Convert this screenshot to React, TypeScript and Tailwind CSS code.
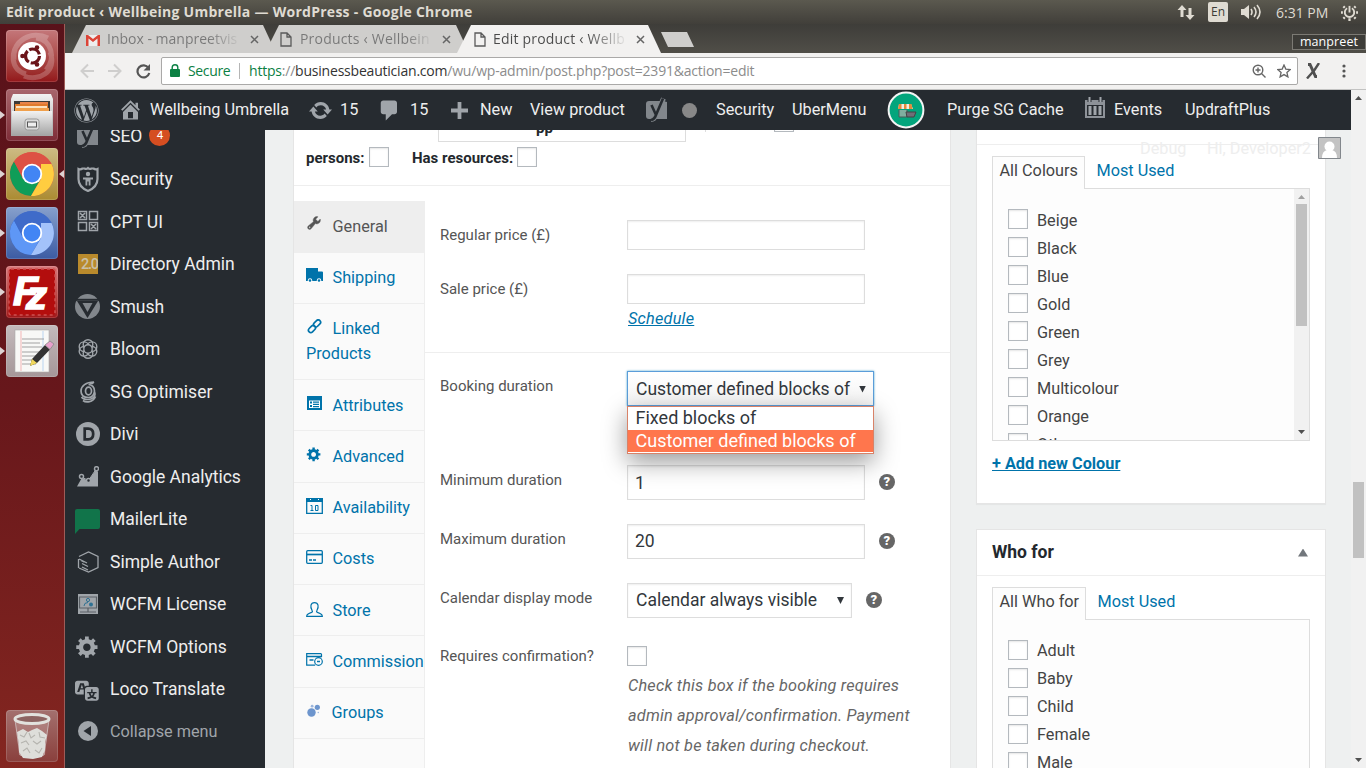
import React from "react";
import { FaWordpress } from "react-icons/fa";

const GEAR =
  "M18 12h-2.18c-.17.7-.44 1.35-.81 1.93l1.54 1.54-2.1 2.1-1.54-1.54c-.58.36-1.23.63-1.91.79V19H8v-2.18c-.68-.16-1.33-.43-1.91-.79l-1.54 1.54-2.12-2.12 1.54-1.54c-.36-.58-.63-1.23-.79-1.91H1V9.03h2.17c.16-.7.44-1.35.8-1.94L2.43 5.55l2.1-2.1 1.54 1.54c.58-.37 1.24-.64 1.93-.81V2h3v2.18c.68.16 1.33.43 1.91.79l1.54-1.54 2.12 2.12-1.54 1.54c.36.59.64 1.24.8 1.94H18V12zm-8.5 1.5c1.66 0 3-1.34 3-3s-1.34-3-3-3-3 1.34-3 3 1.34 3 3 3z";
const HOME =
  "M16 8.5l1.53 1.53-1.06 1.06L10 4.6l-6.47 6.49-1.06-1.06L10 2.5l4 4v-2h2v4zm-6-2.46l6 5.99V18H4v-5.97zM12 17v-5H8v5h4z";
const UPDATE =
  "M10.2 3.28c3.53 0 6.43 2.61 6.92 6h2.08l-3.5 4-3.5-4h2.32c-.45-1.97-2.21-3.45-4.32-3.45-1.45 0-2.73.71-3.54 1.78L4.95 5.66C6.23 4.2 8.11 3.28 10.2 3.28zm-.4 13.44c-3.52 0-6.43-2.61-6.92-6H.8l3.5-4c1.17 1.33 2.33 2.67 3.5 4H5.48c.45 1.97 2.21 3.45 4.32 3.45 1.45 0 2.73-.71 3.54-1.78l1.71 1.95c-1.28 1.46-3.15 2.38-5.25 2.38z";
const COMMENT =
  "M5 2h9c1.1 0 2 .9 2 2v7c0 1.1-.9 2-2 2h-2l-5 5v-5H5c-1.1 0-2-.9-2-2V4c0-1.1.9-2 2-2z";
const WRENCH =
  "M16.68 9.77c-1.34 1.34-3.3 1.67-4.95.99l-5.41 6.52c-.99.99-2.59.99-3.58 0s-.99-2.59 0-3.57l6.52-5.42c-.68-1.65-.35-3.61.99-4.95 1.28-1.28 3.12-1.62 4.72-1.06l-2.89 2.89 2.82 2.82 2.86-2.87c.53 1.58.18 3.39-1.08 4.65zM3.81 16.21c.4.39 1.04.39 1.43 0 .4-.4.4-1.04 0-1.43-.39-.4-1.03-.4-1.43 0-.39.39-.39 1.03 0 1.43z";
const TRANSLATE =
  "M11 7H9.49c-.63 0-1.25.3-1.59.7L7 5H4.13l-2.39 7h1.69l.74-2H7v4H2c-1.1 0-2-.9-2-2V5c0-1.1.9-2 2-2h7c1.1 0 2 .9 2 2v2zM6.51 9H4.49l1-2.93zM10 8h7c1.1 0 2 .9 2 2v7c0 1.1-.9 2-2 2h-7c-1.1 0-2-.9-2-2v-7c0-1.1.9-2 2-2zm7.25 5v-1.08h-3.17V9.75h-1.16v2.17H9.75V13h1.28c.11.85.56 1.85 1.28 2.62-.87.36-1.89.62-2.31.62-.01.02.22.97.2 1.46.84 0 2.21-.5 3.28-1.15 1.09.65 2.48 1.15 3.34 1.15-.02-.49.2-1.44.2-1.46-.43 0-1.49-.27-2.38-.63.7-.77 1.14-1.77 1.25-2.61h1.36zm-3.81 1.93c-.5-.46-.85-1.13-1.01-1.93h2.09c-.17.8-.51 1.47-1 1.93l-.04.03s-.03-.02-.04-.03z";

function Dash({ d, className = "size-[25px]" }: { d: string; className?: string }) {
  return (
    <svg viewBox="0 0 20 20" className={className} fill="currentColor" fillRule="evenodd">
      <path d={d} />
    </svg>
  );
}

function Yoast() {
  return (
    <svg viewBox="0 0 22 26" className="h-[26px] w-[22px]">
      <path d="M3 4h14l4 1v17H3a3 3 0 0 1-3-3V7a3 3 0 0 1 3-3z" fill="#82878c" />
      <path d="M5 8l5 10M17.5 1.5L10 18c-1 3-2.5 4.500-5 4.500" fill="none" stroke="#82878c" strokeWidth="5" />
      <path d="M5.500 8l4.500 10M17 1.500L10 18c-1 3-2.500 4.500-5 5" fill="none" stroke="#262b30" strokeWidth="2.600" />
    </svg>
  );
}

/* ---------- Desktop top panel ---------- */

function TopPanel() {
  return (
    <div className="flex h-6 shrink-0 items-center bg-linear-to-b from-[#5b594f] to-[#413f3a] pl-[6px] font-['Open_Sans','Noto_Sans',sans-serif] text-[#dfdbd2]">
      <div className="w-[1171px] whitespace-nowrap text-[14px] leading-6 font-bold tracking-[0.27px]">
        Edit product ‹ Wellbeing Umbrella — WordPress - Google Chrome
      </div>
      <svg viewBox="0 0 18 17" className="mr-[13px] h-[17px] w-[18px]" fill="#dfdbd2">
        <path d="M5 1l4.500 5H6.500v7h-3V6H.5zM13 16l-4.500-5h3V4h3v7h3z" />
      </svg>
      <div className="mr-[13px] flex h-5 w-5 items-center justify-center rounded-[2px] bg-[#dfdbd2] text-[12px] text-[#3c3b37]">
        En
      </div>
      <svg viewBox="0 0 21 18" className="mr-[14px] h-[18px] w-[21px]">
        <path d="M0 6h3l5-4v14l-5-4H0z" fill="#dfdbd2" />
        <path d="M10 6q2 3 0 6M13 4q4 5 0 10M16 2q6 7 0 14" fill="none" stroke="#dfdbd2" strokeWidth="1.600" />
      </svg>
      <div className="w-[65px] whitespace-nowrap text-[14px]">6:31 PM</div>
      <svg viewBox="0 0 18 18" className="size-[17px]" fill="none" stroke="#dfdbd2">
        <path d="M6.500 4.500a5 5 0 1 0 5 0" strokeWidth="2" />
        <path d="M9 2v7" strokeWidth="2" />
        <path d="M9 15v3M2 9H0M18 9h-2M4 4L2.500 2.500M14 4l1.500-1.500M4 14l-1.500 1.500M14 14l1.500 1.500" strokeWidth="2.400" />
      </svg>
    </div>
  );
}

/* ---------- Launcher ---------- */

function UbuntuIcon() {
  return (
    <svg viewBox="0 0 52 52" className="size-[52px]">
      <g fill="none" stroke="#fff" strokeOpacity=".22" strokeWidth="5">
        <path d="M8 30C6 10 26 0 42 8M20 44C4 40 4 20 14 12M44 22c8 20-12 30-26 24M30 8c16 2 20 20 10 32" />
      </g>
      <circle cx="26" cy="26" r="14" fill="#fff" />
      <circle cx="26.500" cy="26" r="7" fill="none" stroke="#6b1419" strokeWidth="3.200" strokeDasharray="12.700 2" />
      <circle cx="16.500" cy="26" r="2.300" fill="#6b1419" />
      <circle cx="31" cy="17.500" r="2.300" fill="#6b1419" />
      <circle cx="31" cy="34.500" r="2.300" fill="#6b1419" />
    </svg>
  );
}

function FilesIcon() {
  return (
    <svg viewBox="0 0 52 52" className="size-[52px]">
      <defs>
        <linearGradient id="cab" x1="0" y1="0" x2="0" y2="1">
          <stop offset="0" stopColor="#f2f2f2" />
          <stop offset="1" stopColor="#a5a5a5" />
        </linearGradient>
      </defs>
      <path d="M7 5h38l2 5v37H5V10z" fill="url(#cab)" />
      <path d="M8 12h36v12H8z" fill="#3c3a38" />
      <path d="M14 13h28v3H14z" fill="#e8844a" />
      <path d="M9 15h33v8H9z" fill="#e07a2c" />
      <path d="M10 17h31v2H10z" fill="#fbe3c2" />
      <path d="M9 19h34v5H9z" fill="#f0a04c" />
      <path d="M6 22h40v24H6z" fill="url(#cab)" />
      <rect x="19" y="30" width="14" height="11" rx="2.500" fill="#dcdcdc" stroke="#999" />
      <rect x="21.500" y="33" width="9" height="5" fill="#eee" stroke="#555" />
    </svg>
  );
}

function ChromeIcon({ blue = false }: { blue?: boolean }) {
  const a = blue ? "#3f6bc9" : "#dd5144";
  const b = blue ? "#5e97f6" : "#0f9d58";
  const c = blue ? "#a3c2fa" : "#ffcd40";
  return (
    <svg viewBox="0 0 52 52" className="size-[52px]">
      <circle cx="26" cy="26" r="22" fill={a} />
      <path d="M8 13.500A22 22 0 0 0 25 48l9.500-17L17 31z" fill={b} />
      <path d="M45.500 16A22 22 0 0 1 25 48l10-17V16z" fill={c} />
      <path d="M26 16h19.500A22 22 0 0 0 8 13.500l9 16z" fill={a} />
      <circle cx="26" cy="26" r="10.200" fill="#fff" />
      <circle cx="26" cy="26" r="8.400" fill="#4285f4" />
    </svg>
  );
}

function FilezillaIcon() {
  return (
    <svg viewBox="0 0 52 52" className="size-[52px]">
      <rect x="3" y="3" width="46" height="46" rx="2" fill="#b30d0d" stroke="#d05050" strokeWidth="1.500" strokeDasharray="3 3" />
      <g fill="#fff" stroke="#fff" strokeWidth="1.500" fontFamily="'Liberation Sans', sans-serif" fontWeight="700" fontStyle="italic">
        <text x="7" y="39" fontSize="40" textLength="25" lengthAdjust="spacingAndGlyphs">F</text>
        <text x="20" y="43" fontSize="39" textLength="21" lengthAdjust="spacingAndGlyphs">z</text>
      </g>
    </svg>
  );
}

function EditorIcon() {
  return (
    <svg viewBox="0 0 52 52" className="size-[52px]">
      <rect x="9" y="5" width="34" height="42" fill="#f8f8f6" stroke="#aaa" strokeWidth=".6" />
      <path d="M15 6v40" stroke="#f3b5b5" />
      <path d="M37 6v40" stroke="#b9d4f0" />
      <path d="M16 14h22M16 18h18M16 22h20M16 27h22M16 31h19M16 35h12M16 39h14" stroke="#999" strokeWidth=".9" />
      <path d="M24 41l2-7L39 20l5 4.500L31 38z" fill="#333" />
      <path d="M39 20l5-4 4 3-4 5.500z" fill="#e8a0cc" stroke="#888" strokeWidth=".8" />
      <path d="M24 41l2-7 5 4z" fill="#f2d95c" />
    </svg>
  );
}

function TrashIcon() {
  return (
    <svg viewBox="0 0 52 52" className="size-[52px]">
      <path d="M9 9l4 36q13 5 26 0l4-36z" fill="#fff" fillOpacity=".18" />
      <path d="M11 22l6-3 5 3 4-2 5-2 5 3 5 4-2 7 0 8-3 7-9 2-10-1-4-6 0-7z" fill="#dededa" />
      <path d="M14 25l4 2 3-5M23 23l2 5 4-3M33 22l1 5 5 1M15 33l5-2 3 4M27 31l4 3 4-3M17 41l4-3 3 5M29 40l4 3 3-5" fill="none" stroke="#b5b4af" strokeWidth="1.100" />
      <path d="M9 10l5 35q12 5 24 0l5-35" fill="none" stroke="#ddd" strokeOpacity=".6" />
      <ellipse cx="26" cy="9" rx="17" ry="4.500" fill="#8d6462" stroke="#e2e2de" strokeWidth="3" />
    </svg>
  );
}

const tileBase = "relative size-[52px] overflow-hidden rounded-[4px] shadow-[inset_0_0_0_1px_rgba(255,255,255,0.15)]";

const launcher = [
  { cls: "bg-linear-to-b from-[#c4777a] to-[#93161a]", icon: <UbuntuIcon />, running: false, active: false },
  { cls: "bg-linear-to-b from-[#a8656c] to-[#7e2d38]", icon: <FilesIcon />, running: true, active: false },
  { cls: "bg-linear-to-b from-[#cdbb83] to-[#ab8b31]", icon: <ChromeIcon />, running: true, active: true },
  { cls: "bg-linear-to-b from-[#87a0cc] to-[#3c5ba3]", icon: <ChromeIcon blue />, running: true, active: false },
  { cls: "bg-linear-to-b from-[#d7777a] to-[#a01518]", icon: <FilezillaIcon />, running: true, active: false },
  { cls: "bg-linear-to-b from-[#c4babc] to-[#a59799]", icon: <EditorIcon />, running: true, active: false },
];

function Launcher() {
  return (
    <div className="flex w-[65px] shrink-0 flex-col gap-[7px] border-r border-[#9e5c58] bg-linear-to-b from-[#59121a] via-[#67171b] to-[#842620] pt-[6px] pb-[6px]">
      {launcher.map((l, i) => (
        <div key={i} className="flex items-center">
          <div className="w-[6px]">
            {l.running && <div className="h-2 w-[5px] bg-[#ddd3d3] [clip-path:polygon(0_0,100%_50%,0_100%)]" />}
          </div>
          <div className={`${tileBase} ${l.cls}`}>{l.icon}</div>
          {l.active && <div className="ml-px h-2 w-[5px] bg-[#ddd3d3] [clip-path:polygon(100%_0,0_50%,100%_100%)]" />}
        </div>
      ))}
      <div className="mt-auto ml-[6px]">
        <div className={`${tileBase} bg-linear-to-b from-[#a3706e] to-[#8a3f3c]`}>
          <TrashIcon />
        </div>
      </div>
    </div>
  );
}

/* ---------- Browser chrome ---------- */

function PageGlyph() {
  return (
    <svg viewBox="0 0 12 15" className="h-[15px] w-3" fill="none" stroke="#5a5a5a" strokeWidth="1.300">
      <path d="M1 1h6l4 4v9H1zM7 1v4h4" />
    </svg>
  );
}

function Tab({ title, icon, className, titleClass }: { title: string; icon: React.ReactNode; className: string; titleClass: string }) {
  return (
    <div className={`flex h-[28px] items-center [clip-path:polygon(14px_0,191px_0,204px_100%,0_100%)] ${className}`}>
      <div className="mt-px flex w-[21px] shrink-0">{icon}</div>
      <div className={`overflow-hidden whitespace-nowrap bg-clip-text text-[14px] leading-6 text-transparent ${titleClass}`}>{title}</div>
      <svg viewBox="0 0 9 9" className="mt-px size-[9px] shrink-0" stroke="#666" strokeWidth="1.500">
        <path d="M1 1l7 7M8 1L1 8" />
      </svg>
    </div>
  );
}

function TabStrip() {
  return (
    <div className="flex h-[29px] shrink-0 items-end bg-linear-to-b from-[#3e3d39] to-[#504e48] pl-[7px]">
      <Tab
        title="Inbox - manpreetvis"
        className="w-[204px] bg-[#cfcecc] pl-[14px]"
        titleClass="mr-[8px] w-[135px] bg-linear-to-r from-[#777] from-75% to-[#cfcecc]"
        icon={
          <svg viewBox="0 0 14 12" className="h-3 w-[14px]">
            <path d="M0 1h14v11H0z" fill="#eee" />
            <path d="M0 1v11h2.500V4.500L7 8l4.500-3.500V12H14V1h-2L7 5 2 1z" fill="#dc4437" />
          </svg>
        }
      />
      <Tab
        title="Products ‹ Wellbein"
        className="-ml-[11px] w-[204px] bg-[#cfcecc] pl-[15px]"
        titleClass="-ml-px mr-[9px] w-[133px] bg-linear-to-r from-[#777] from-80% to-[#cfcecc] tracking-[0.2px]"
        icon={<PageGlyph />}
      />
      <Tab
        title="Edit product ‹ Wellb"
        className="-ml-[12px] w-[204px] bg-[#f2f1f0] pl-[17px]"
        titleClass="-ml-[2px] mr-[8px] w-[135px] bg-linear-to-r from-[#4a4a4a] from-70% to-[#f2f1f0] tracking-[0.2px]"
        icon={<PageGlyph />}
      />
      <div className="mb-[6px] h-[15px] w-[33px] bg-[#cfcecc] [clip-path:polygon(0_0,26px_0,100%_100%,7px_100%)]" />
      <div className="mb-[3px] ml-auto flex h-4 w-[74px] items-center justify-center border border-[#7c7a74] bg-[#3d3c38] text-[12.500px] tracking-[0.1px] text-white">
        manpreet
      </div>
    </div>
  );
}

function Toolbar() {
  return (
    <div className="flex h-[37px] shrink-0 items-center border-b border-[#c3c3c2] bg-[#f2f1f0]">
      <svg viewBox="0 0 72 16" className="ml-[15px] h-4 w-[72px]" fill="none" strokeWidth="2">
        <path d="M14 8H1.500M8 1.500L1.500 8 8 14.500M28 8h12.500M34 1.500L40.500 8 34 14.500" stroke="#cfcecd" />
        <path d="M68.500 5a6 6 0 1 0 .8 5" stroke="#555" strokeWidth="2.200" />
        <path d="M70 1v6.500h-6.500z" fill="#555" />
      </svg>
      <div className="ml-[9px] flex h-[28px] w-[1137px] items-center rounded-[2px] border border-[#aaa9a8] bg-white pb-px text-[14px]">
        <svg viewBox="0 0 10 13" className="ml-2 h-[13px] w-[10px]" fill="#0b8043">
          <path d="M1 5h8q1 0 1 1v6q0 1-1 1H1q-1 0-1-1V6q0-1 1-1z" />
          <path d="M2.200 6V3.500a2.800 2.800 0 0 1 5.600 0V6" fill="none" stroke="#0b8043" strokeWidth="1.400" />
        </svg>
        <span className="ml-[8px] w-[51px] text-[#0b8043] tracking-[-0.35px]">Secure</span>
        <span className="mr-[9px] h-[16px] w-px bg-[#b5b5b5]" />
        <span className="whitespace-nowrap tracking-[-0.21px] text-[#8c8c8c]">
          <span className="text-[#0b8043]">https</span>://<span className="text-[#333]">businessbeautician.com</span>
          /wu/wp-admin/post.php?post=2391&amp;action=edit
        </span>
        <svg viewBox="0 0 14 14" className="mr-[11px] ml-auto size-[14px]" fill="none" stroke="#666" strokeWidth="1.400">
          <circle cx="6" cy="6" r="4.800" />
          <path d="M9.500 9.500l4 4M6 3.500v5M3.500 6h5" />
        </svg>
        <svg viewBox="0 0 14 14" className="mr-[6px] size-[14px]" fill="none" stroke="#666" strokeWidth="1.300">
          <path d="M7 1l1.800 4.100 4.400.4-3.300 3 1 4.400L7 10.600l-3.900 2.300 1-4.400-3.300-3 4.400-.4z" />
        </svg>
      </div>
      <svg viewBox="0 0 14 16" className="ml-2 h-4 w-[14px]" fill="none" stroke="#505050">
        <path d="M2 1.500h2l5.500 12h1.500" strokeWidth="3" />
        <path d="M13 0L8.500 7 1 15.500" strokeWidth="2.400" />
      </svg>
      <svg viewBox="0 0 4 14" className="ml-[22px] h-[14px] w-1" fill="#555">
        <circle cx="2" cy="2" r="1.600" />
        <circle cx="2" cy="7" r="1.600" />
        <circle cx="2" cy="12" r="1.600" />
      </svg>
    </div>
  );
}

/* ---------- WordPress admin bar ---------- */

function StoreBadge() {
  return (
    <svg viewBox="0 0 38 38" className="size-[38px]">
      <circle cx="19" cy="19" r="17.400" fill="#03a57c" stroke="#f4f4f4" strokeWidth="2" />
      <path d="M12 13h12l2 5H11z" fill="#f2ede2" />
      <path d="M12 13h2.500v5H11zM17 13h2.500v5H17zM22 13h2.500l1 5H22z" fill="#e58a3a" />
      <path d="M12 19v7h8v-7" fill="#7fae9f" stroke="#4b5b58" />
      <path d="M19 21h10l-2 5h-7z" fill="#6f6f78" stroke="#444" />
    </svg>
  );
}

function AdminBar() {
  return (
    <div className="flex h-10 shrink-0 items-center bg-[#262b30] text-[16.25px] whitespace-nowrap text-[#eee]">
      <div className="w-[53px] pl-[9px] text-[25px] text-[#a0a5aa]"><FaWordpress /></div>
      <div className="w-[32px] text-[#a0a5aa]"><Dash d={HOME} className="mt-[-1px] size-[25px]" /></div>
      <div className="w-[158px]">Wellbeing Umbrella</div>
      <div className="w-[33px] text-[#a0a5aa]"><Dash d={UPDATE} /></div>
      <div className="w-[36px] -ml-px mr-px">15</div>
      <div className="w-[33px] text-[#a0a5aa]"><Dash d={COMMENT} /></div>
      <div className="w-[41px]">15</div>
      <div className="w-[29px] text-[#a0a5aa]">
        <svg viewBox="0 0 18 18" className="mt-px size-[17px]" fill="currentColor"><path d="M7 0h4v7h7v4h-7v7H7v-7H0V7h7z" /></svg>
      </div>
      <div className="w-[50px]">New</div>
      <div className="w-[116px]">View product</div>
      <div className="w-[36px]"><Yoast /></div>
      <div className="w-[34px]"><div className="size-[15px] rounded-full bg-[#888]" /></div>
      <div className="w-[76px]">Security</div>
      <div className="w-[95px]">UberMenu</div>
      <div className="w-[60px]"><StoreBadge /></div>
      <div className="w-[137px]">Purge SG Cache</div>
      <svg viewBox="0 0 22 22" className="-mt-1 mr-[8px] h-[22px] w-[22px] shrink-0">
        <path d="M1 3h20v18H1z" fill="#8d9298" />
        <path d="M5.500 0v5M16.500 0v5" stroke="#262b30" strokeWidth="4" />
        <path d="M5.500 0v5M16.500 0v5" stroke="#a0a5aa" strokeWidth="2" />
        <path d="M3 8h16v11H3z" fill="#262b30" />
        <path d="M6 9v9M11 9v9M16 9v9" stroke="#a0a5aa" strokeWidth="3" />
      </svg>
      <div className="w-[71px]">Events</div>
      <div>UpdraftPlus</div>
    </div>
  );
}

/* ---------- WordPress sidebar ---------- */

const g = "#a0a5aa";

const menu: { label: string; icon: React.ReactNode; badge?: string }[] = [
  { label: "SEO", badge: "4", icon: <div className="mt-[1px]"><Yoast /></div> },
  {
    label: "Security",
    icon: (
      <svg viewBox="0 0 22 26" className="h-[26px] w-[22px]">
        <path d="M1.500 3q2 1 4-.5h2Q9.500 3.500 11 2q1.500 1.500 3.500.5h2q2 1.500 4 .5v10q0 8-9.500 12Q1.500 21 1.500 13z" fill="none" stroke={g} strokeWidth="2.200" />
        <circle cx="11" cy="8" r="2.200" fill={g} />
        <path d="M6 11.500h10v2h-2.500v6h-1.800v-4h-1.400v4H8.500v-6H6z" fill={g} />
      </svg>
    ),
  },
  {
    label: "CPT UI",
    icon: (
      <svg viewBox="0 0 22 22" className="-mt-[2px] size-[22px]" fill="none" stroke={g} strokeWidth="1.500">
        <path d="M1.500 1.500h8v8h-8zM12.500 1.500h8v8h-8zM1.500 12.500h8v8h-8zM12.500 12.500h8v8h-8zM3 3l5 5M8 3L3 8M14 14l5 5M19 14l-5 5" />
      </svg>
    ),
  },
  {
    label: "Directory Admin",
    icon: (
      <svg viewBox="0 0 20 20" className="size-5">
        <path d="M0 0h20v20H0z" fill="#b98a2c" />
        <text x="3" y="15" fontSize="14.500" fontWeight="500" fill="#c9c0a8" textLength="18">2.0</text>
      </svg>
    ),
  },
  {
    label: "Smush",
    icon: (
      <svg viewBox="0 0 25 25" className="size-[25px]">
        <circle cx="12.500" cy="12.500" r="12.500" fill="#82878c" />
        <path d="M2 7h21L12.500 24z" fill="#262b30" />
        <path d="M7.500 9h10L12.500 18z" fill="#82878c" />
        <path d="M0 5.800h25" stroke="#262b30" strokeWidth="2" />
      </svg>
    ),
  },
  {
    label: "Bloom",
    icon: (
      <svg viewBox="0 0 22 22" className="size-[22px]" fill="none" stroke={g} strokeWidth="1.400">
        <circle cx="11" cy="6.500" r="4.800" /><circle cx="15" cy="8.700" r="4.800" /><circle cx="15" cy="13.300" r="4.800" />
        <circle cx="11" cy="15.500" r="4.800" /><circle cx="7" cy="13.300" r="4.800" /><circle cx="7" cy="8.700" r="4.800" />
        <circle cx="11" cy="11" r="4.200" fill="#262b30" />
      </svg>
    ),
  },
  {
    label: "SG Optimiser",
    icon: (
      <svg viewBox="0 0 18 22" className="h-[22px] w-[18px]" fill="none" stroke={g} strokeWidth="1.700">
        <ellipse cx="9.500" cy="10" rx="3" ry="3.800" />
        <path d="M15 1C7 1 2 5 2 10s4 6.500 7.500 6.500 6-3 6-6.500-2.500-6.500-6-6.500M15 1c-1 1.500-2.500 2-5 2.500" />
        <path d="M15.500 11c2 5-3 7.500-6.500 7.500S3.500 17.500 2.500 16M4 19.500c3 2.500 10 2 12.500-4" />
      </svg>
    ),
  },
  {
    label: "Divi",
    icon: (
      <svg viewBox="0 0 24 24" className="size-6">
        <circle cx="12" cy="12" r="12" fill={g} />
        <path d="M8.700 6.700h3.500c3.200 0 5 2 5 5.200s-1.800 5.400-5 5.400H8.700z" fill="none" stroke="#262b30" strokeWidth="2.700" />
      </svg>
    ),
  },
  {
    label: "Google Analytics",
    icon: (
      <svg viewBox="0 0 23 21" className="h-[21px] w-[23px]">
        <path d="M1 20.500l5-9 6 3.500 8.500-12 1.500 3v14.500z" fill={g} />
        <path d="M5.500 11L12.500 14.500 20.500 2.500" stroke={g} fill="none" />
        <g fill="#262b30" stroke={g} strokeWidth="1.500"><circle cx="5.500" cy="10.500" r="2" /><circle cx="12.500" cy="14.500" r="2" /><circle cx="20.500" cy="2.700" r="2" /></g>
      </svg>
    ),
  },
  {
    label: "MailerLite",
    icon: (
      <svg viewBox="0 0 25 25" className="mt-[4px] h-[25px] w-[25px]"><path d="M2 0h21q2 0 2 2v16q0 2-2 2H4.500L0 25V2q0-2 2-2z" fill="#11744a" /></svg>
    ),
  },
  {
    label: "Simple Author",
    icon: (
      <svg viewBox="0 0 22 22" className="size-[22px]" fill="none" stroke={g} strokeWidth="1.300">
        <path d="M2 5.500L11.500 1 21 5.500v11L11.500 21 2 17M1.500 8v9M2 8l8 4M5 12.500l6 3M5 16l6 3M4 9.500l3 1.500" />
      </svg>
    ),
  },
  {
    label: "WCFM License",
    icon: (
      <svg viewBox="0 0 20 20" className="size-5">
        <path d="M0 0h20v20H0z" fill={g} />
        <path d="M1.500 3h17v11h-17zM10 14v4M2 18h16" fill="none" stroke="#5a6066" strokeWidth="1.200" />
        <circle cx="10" cy="6" r="1.600" fill="none" stroke="#2e7193" /><path d="M6 12q0-3.500 4-3.500" fill="none" stroke="#2e7193" /><circle cx="13" cy="10.500" r="2" fill="#2e7193" />
      </svg>
    ),
  },
  { label: "WCFM Options", icon: <Dash d={GEAR} className="size-[25px] -mt-px" /> },
  { label: "Loco Translate", icon: <Dash d={TRANSLATE} className="size-[25px]" /> },
];

function Sidebar() {
  return (
    <div className="w-[200px] shrink-0 overflow-hidden bg-[#262b30] text-[17.5px] text-[#eee]">
      <div className="-mt-[14.55px]">
        {menu.map((m) => (
          <div key={m.label} className={`flex h-[42.5px] items-center whitespace-nowrap ${m.badge ? "pb-[1.500px]" : ""}`}>
            <div className="flex w-[45px] shrink-0 justify-center text-[#a0a5aa]">{m.icon}</div>
            {m.label}
            {m.badge && (
              <span className="ml-[7px] flex size-[21px] items-center justify-center rounded-full bg-[#d54e21] text-[11.5px] text-white">{m.badge}</span>
            )}
          </div>
        ))}
        <div className="flex h-[42.5px] items-center text-[16.25px] text-[#a0a5aa]">
          <div className="flex w-[45px] justify-center">
            <svg viewBox="0 0 20 20" className="-mt-px size-5"><circle cx="10" cy="10" r="10" fill={g} /><path d="M13 5v10L5.500 10z" fill="#262b30" /></svg>
          </div>
          Collapse menu
        </div>
      </div>
    </div>
  );
}

/* ---------- Product data panel ---------- */

const dataTabs: { label: string; h: string; icon: React.ReactNode }[] = [
  {
    label: "Shipping",
    h: "h-[51px] pt-[12px]",
    icon: (
      <svg viewBox="0 0 17 15" className="-mt-[2px] h-[15px] w-[17px]" fill="currentColor"><path d="M0 0h12v3.500h4q1 0 1 1V13H0z" /><circle cx="4" cy="12.500" r="2.200" fill="#fff" /><circle cx="13" cy="12.500" r="2.200" fill="#fff" /><circle cx="4" cy="12.500" r="1.300" /><circle cx="13" cy="12.500" r="1.300" /></svg>
    ),
  },
  {
    label: "Linked Products",
    h: "h-[76px] pt-[12px]",
    icon: (
      <svg viewBox="0 0 16 16" className="-mt-[2px] ml-px h-[15px] w-[15px]" fill="none" stroke="currentColor" strokeWidth="1.800">
        <rect x="-3.900" y="-2.500" width="8.500" height="5" rx="2.500" transform="translate(10.500 5) rotate(-45)" />
        <rect x="-4.500" y="-2.500" width="8.500" height="5" rx="2.500" transform="translate(5.500 10.500) rotate(-45)" />
      </svg>
    ),
  },
  {
    label: "Attributes",
    h: "h-[51px] pt-[13px]",
    icon: (
      <svg viewBox="0 0 15 14" className="-mt-[2px] ml-px h-[14px] w-[15px]" fill="currentColor"><path d="M0 0h15v14H0z" /><path d="M2 4.500h11v7.500H2z" fill="#fff" /><path d="M3 5.500h2v2H3zM3 9h2v2H3zM6 5.500h6v1.300H6zM6 7.700h6V9H6zM6 10h6v1.200H6z" /></svg>
    ),
  },
  { label: "Advanced", h: "h-[52px] pt-[13px]", icon: <Dash d={GEAR} className="-mt-[2px] size-[16px]" /> },
  {
    label: "Availability",
    h: "h-[51px] pt-[12px]",
    icon: (
      <svg viewBox="0 0 17 16" className="h-4 w-[17px]"><path d="M.7.700h15.600v14.600H.7z" fill="none" stroke="currentColor" strokeWidth="1.300" /><path d="M0 0h17v4H0z" fill="currentColor" /><path d="M4 1h1v1H4zM12 1h1v1h-1z" fill="#fff" /><path d="M4.500 7.500H6v5M4.500 12.500h3M9.500 7.500h2.500v5H9.500z" fill="none" stroke="currentColor" /></svg>
    ),
  },
  {
    label: "Costs",
    h: "h-[51px] pt-[12px]",
    icon: (
      <svg viewBox="0 0 17 14" className="h-[14px] w-[17px]" fill="none" stroke="currentColor" strokeWidth="1.300"><rect x=".7" y=".7" width="15.600" height="12.600" rx="1" /><path d="M1 4.500h15" strokeWidth="1.700" /><path d="M3 10h3M7 10h3" /></svg>
    ),
  },
  {
    label: "Store",
    h: "h-[51px] pt-[13px]",
    icon: (
      <svg viewBox="0 0 17 15" className="h-[15px] w-[17px]" fill="none" stroke="currentColor" strokeWidth="1.200"><path d="M.7 14.300h15.600c0-2.500-2-3-5.300-4-.7-.5-.5-1.300 0-2 2-3.500 1.500-7.600-2.500-7.600S4 4.800 6 8.300c.5.700.7 1.500 0 2-3.300 1-5.300 1.500-5.300 4z" /></svg>
    ),
  },
  {
    label: "Commission",
    h: "h-[52px] pt-[13px]",
    icon: (
      <svg viewBox="0 0 17 14" className="-mt-px h-[14px] w-[17px]" fill="none" stroke="currentColor" strokeWidth="1.200"><path d="M15.500 4V1.500q0-.8-.8-.8H.7v11.500h8.500" /><path d="M1 3.500h15" strokeWidth="1.500" /><circle cx="12.500" cy="8.500" r="3.800" fill="#fafafa" /><path d="M11 8.500h3M3.500 7h4" strokeWidth="1.400" /></svg>
    ),
  },
  {
    label: "Groups",
    h: "h-[51px] pt-[12px]",
    icon: (
      <svg viewBox="0 0 16 16" className="ml-px h-4 w-[15px]" fill="#6d95cd"><circle cx="4.800" cy="9.500" r="4.500" /><circle cx="11" cy="4" r="2.800" /><circle cx="5.500" cy="2.800" r="1.500" fill="#9bb5dc" /><circle cx="12" cy="9.500" r=".8" fill="#9bb5dc" /></svg>
    ),
  },
];

function DataTabs() {
  return (
    <div className="mt-[15px] w-[131px] shrink-0 border-r border-[#eee] bg-[#fafafa] text-[16.25px] leading-[25px] text-[#0073aa]">
      <div className="flex h-[52px] bg-[#eee] pt-[13px] pl-[12px] text-[#555]">
        <span className="w-[26.5px] shrink-0 pt-px"><Dash d={WRENCH} className="size-[16px] stroke-current stroke-[0.5]" /></span>
        General
      </div>
      {dataTabs.map((t) => (
        <div key={t.label} className={`${t.h} border-b border-[#eee] pl-[12px]`}>
          <span className={`float-left flex h-[22px] items-center ${t.label === "Groups" ? "w-[25.5px]" : "w-[26.5px]"}`}>
            {t.icon}
          </span>
          {t.label}
        </div>
      ))}
    </div>
  );
}

const fieldBox = "border border-[#ddd] bg-white shadow-[inset_0_1px_2px_rgba(0,0,0,0.07)] text-[17.5px] text-[#32373c]";

function Field({ label, className, labelClass, children }: { label: string; className: string; labelClass: string; children: React.ReactNode }) {
  return (
    <div className={`flex pl-[15px] ${className}`}>
      <div className={`w-[187px] shrink-0 text-[15px] leading-[30px] ${labelClass}`}>{label}</div>
      {children}
    </div>
  );
}

function Help() {
  return (
    <span className="mt-[9px] ml-[14px] flex size-[15.500px] items-center justify-center rounded-full bg-[#666] text-[13px] leading-none font-black text-white">?</span>
  );
}

function Arrow() {
  return <span className="h-[7px] w-[7px] bg-[#32373c] [clip-path:polygon(0_0,100%_0,50%_100%)]" />;
}

function Check() {
  return <span className="inline-block size-5 shrink-0 border border-[#b4b9be] bg-white shadow-[inset_0_1px_2px_rgba(0,0,0,0.1)]" />;
}

function ProductForm() {
  return (
    <div className="min-w-0 flex-1 text-[#555]">
      <Field label="Regular price (£)" className="mt-[34px]" labelClass="">
        <div className={`h-[30px] w-[238px] ${fieldBox}`} />
      </Field>
      <Field label="Sale price (£)" className="mt-[24px]" labelClass="">
        <div>
          <div className={`h-[30px] w-[238px] ${fieldBox}`} />
          <div className="mt-[2px] ml-px h-[26px] text-[16.25px] leading-[26px] tracking-[0.23px] text-[#0073aa] italic underline">Schedule</div>
        </div>
      </Field>
      <div className="mt-[20px] border-t border-[#eee]" />
      <Field label="Booking duration" className="mt-[18px]" labelClass="">
        <div className="relative">
          <div className="flex h-[35px] w-[247px] items-center justify-between border border-[#5b9dd9] bg-linear-to-b from-white to-[#f4f4f4] pt-px pr-[7px] pl-[8px] text-[17.5px] text-[#32373c] shadow-[0_0_2px_rgba(30,140,190,0.8)]">
            Customer defined blocks of
            <Arrow />
          </div>
          <div className="absolute top-[35px] left-0 z-10 w-[247px] border border-[#d88268] bg-white pb-px text-[18px] whitespace-nowrap text-[#32373c] shadow-[0_8px_24px_rgba(0,0,0,0.4)]">
            <div className="h-[23px] pl-[7.500px] leading-[22px]">Fixed blocks of</div>
            <div className="h-[22px] bg-[#ff764d] pl-[7.500px] leading-[21px] text-white">Customer defined blocks of</div>
          </div>
        </div>
      </Field>
      <Field label="Minimum duration" className="mt-[59px]" labelClass="">
        <div className={`h-[35px] w-[238px] pl-[7px] leading-[34px] ${fieldBox}`}>1</div>
        <Help />
      </Field>
      <Field label="Maximum duration" className="mt-[24px]" labelClass="">
        <div className={`h-[35px] w-[238px] pl-[7px] leading-[33px] ${fieldBox}`}>20</div>
        <Help />
      </Field>
      <Field label="Calendar display mode" className="mt-[24px]" labelClass="">
        <div className={`flex h-[35px] w-[225px] items-center justify-between pr-[7px] pl-[8px] ${fieldBox}`}>
          Calendar always visible
          <Arrow />
        </div>
        <Help />
      </Field>
      <Field label="Requires confirmation?" className="mt-[28px]" labelClass="-mt-[5px]">
        <div>
          <div className="flex"><Check /></div>
          <div className="mt-[5px] ml-px text-[16.25px] leading-[30px] tracking-[0.21px] whitespace-nowrap text-[#666] italic">
            Check this box if the booking requires<br />
            admin approval/confirmation. Payment<br />
            will not be taken during checkout.
          </div>
        </div>
      </Field>
    </div>
  );
}

function ProductPanel() {
  return (
    <div className="ml-[28px] flex w-[658px] shrink-0 flex-col overflow-hidden border-x border-[#e5e5e5] bg-white">
      <div className="relative h-[56px] shrink-0 border-b border-[#eee] text-[15px] font-bold text-[#23282d]">
        <div className="ml-[144px] flex h-[12px] w-[248px] items-end border border-t-0 border-[#ddd] pl-[97px]">
          <span className="mb-px leading-6">pp</span>
        </div>
        <div className="absolute -top-[18px] left-[480px]"><Check /></div>
        <div className="absolute top-0 left-[411px] h-[2px] w-px bg-[#ddd]" />
        <div className="mt-[5px] flex items-start pl-[12px] leading-5">
          <span className="w-[63px] pt-px">persons:</span>
          <Check />
          <span className="ml-[23px] w-[105px] pt-px">Has resources:</span>
          <Check />
        </div>
      </div>
      <div className="flex min-h-0 flex-1">
        <DataTabs />
        <ProductForm />
      </div>
    </div>
  );
}

/* ---------- Taxonomy boxes ---------- */

function CheckList({ items, lineClass }: { items: string[]; lineClass: string }) {
  return (
    <div className="min-w-0 flex-1 pt-[20px] pl-[15px]">
      {items.map((c) => (
        <div key={c} className="flex h-[28px]">
          <Check />
          <span className={`ml-[9px] ${lineClass}`}>{c}</span>
        </div>
      ))}
    </div>
  );
}

function TaxTabs({ label, width }: { label: string; width: string }) {
  return (
    <div className="relative z-[1] flex h-[33px] leading-[28px]">
      <div className={`border border-b-0 border-[#ddd] bg-[#fdfdfd] pl-[6.500px] ${width}`}>{label}</div>
      <div className="ml-[11.500px] pt-px text-[#0073aa]">Most Used</div>
    </div>
  );
}

function Triangle({ className }: { className: string }) {
  return <span className={`block ${className}`} />;
}

function RightColumn() {
  return (
    <div className="ml-[25px] flex w-[350px] shrink-0 flex-col text-[16.25px] whitespace-nowrap text-[#444]">
      <div className="h-[374px] shrink-0 border border-t-0 border-[#e5e5e5] bg-white shadow-[0_1px_1px_rgba(0,0,0,0.04)]">
        <div className="h-[15px] border-b border-[#eee]" />
        <div className="px-[15px] pt-[11px]">
          <TaxTabs label="All Colours" width="w-[93px]" />
          <div className="-mt-px flex h-[253px] overflow-hidden border border-[#ddd] bg-[#fdfdfd]">
            <CheckList lineClass="leading-[24px]" items={["Beige", "Black", "Blue", "Gold", "Green", "Grey", "Multicolour", "Orange", "Other"]} />
            <div className="flex w-[15px] flex-col items-center bg-[#f1f1f1]">
              <Triangle className="mt-[6px] h-1 w-[7px] bg-[#a0a0a0] [clip-path:polygon(50%_0,100%_100%,0_100%)]" />
              <div className="mt-[5px] h-[122px] w-[11px] bg-[#c1c1c1]" />
              <Triangle className="mt-auto mb-[6px] h-1 w-[7px] bg-[#505050] [clip-path:polygon(0_0,100%_0,50%_100%)]" />
            </div>
          </div>
          <div className="mt-[10px] leading-[25px] font-bold text-[#0073aa] underline">+ Add new Colour</div>
        </div>
      </div>
      <div className="mt-[25px] h-[260px] shrink-0 border border-[#e5e5e5] bg-white">
        <div className="flex h-[46px] items-center justify-between border-b border-[#eee] pr-[17px] pl-[15px] text-[17.5px] font-bold text-[#23282d]">
          Who for
          <Triangle className="h-[8px] w-[10px] bg-[#72777c] [clip-path:polygon(50%_0,100%_100%,0_100%)]" />
        </div>
        <div className="px-[15px] pt-[11px]">
          <TaxTabs label="All Who for" width="w-[94px]" />
          <div className="-mt-px flex h-[260px] border border-[#ddd] bg-[#fdfdfd]">
            <CheckList lineClass="leading-[22px]" items={["Adult", "Baby", "Child", "Female", "Male"]} />
          </div>
        </div>
      </div>
    </div>
  );
}

export default function App() {
  return (
    <div className="flex h-[768px] w-[1366px] flex-col overflow-hidden">
      <TopPanel />
      <div className="flex min-h-0 flex-1">
        <Launcher />
        <div className="flex min-w-0 flex-1 flex-col">
          <div className="flex flex-col font-['Open_Sans','Noto_Sans',sans-serif]">
            <TabStrip />
            <Toolbar />
          </div>
          <div className="flex min-h-0 flex-1 font-['Roboto',sans-serif]">
            <div className="relative flex w-[1286px] flex-col bg-[#eef0f0]">
              <AdminBar />
              <div className="flex min-h-0 flex-1 overflow-hidden">
                <Sidebar />
                <ProductPanel />
                <RightColumn />
              </div>
              <div className="absolute top-[47px] left-[1075px] flex h-[24px] items-center text-[16.25px] whitespace-nowrap text-[#eee]">
                <span className="w-[67px] pt-px">Debug</span>
                <span className="w-[111px] pt-px">Hi, Developer2</span>
                <svg viewBox="0 0 23 22" className="-mt-[2px] h-[22px] w-[23px]">
                  <path d="M.5.5h22v21H.5z" fill="#c3c3c3" stroke="#82878c" />
                  <circle cx="11.500" cy="9.500" r="5" fill="#fff" />
                  <path d="M4 21q0-7 5-8h5q5 1 5 8z" fill="#fff" />
                </svg>
              </div>
            </div>
            <div className="flex w-[15px] flex-col items-center bg-[#f1f1f1]">
              <Triangle className="mt-[6px] h-1 w-[7px] bg-[#505050] [clip-path:polygon(50%_0,100%_100%,0_100%)]" />
              <div className="mt-[382px] h-[76px] w-[11px] bg-[#c1c1c1]" />
              <Triangle className="mt-auto mb-[6px] h-1 w-[7px] bg-[#505050] [clip-path:polygon(0_0,100%_0,50%_100%)]" />
            </div>
          </div>
        </div>
      </div>
    </div>
  );
}
